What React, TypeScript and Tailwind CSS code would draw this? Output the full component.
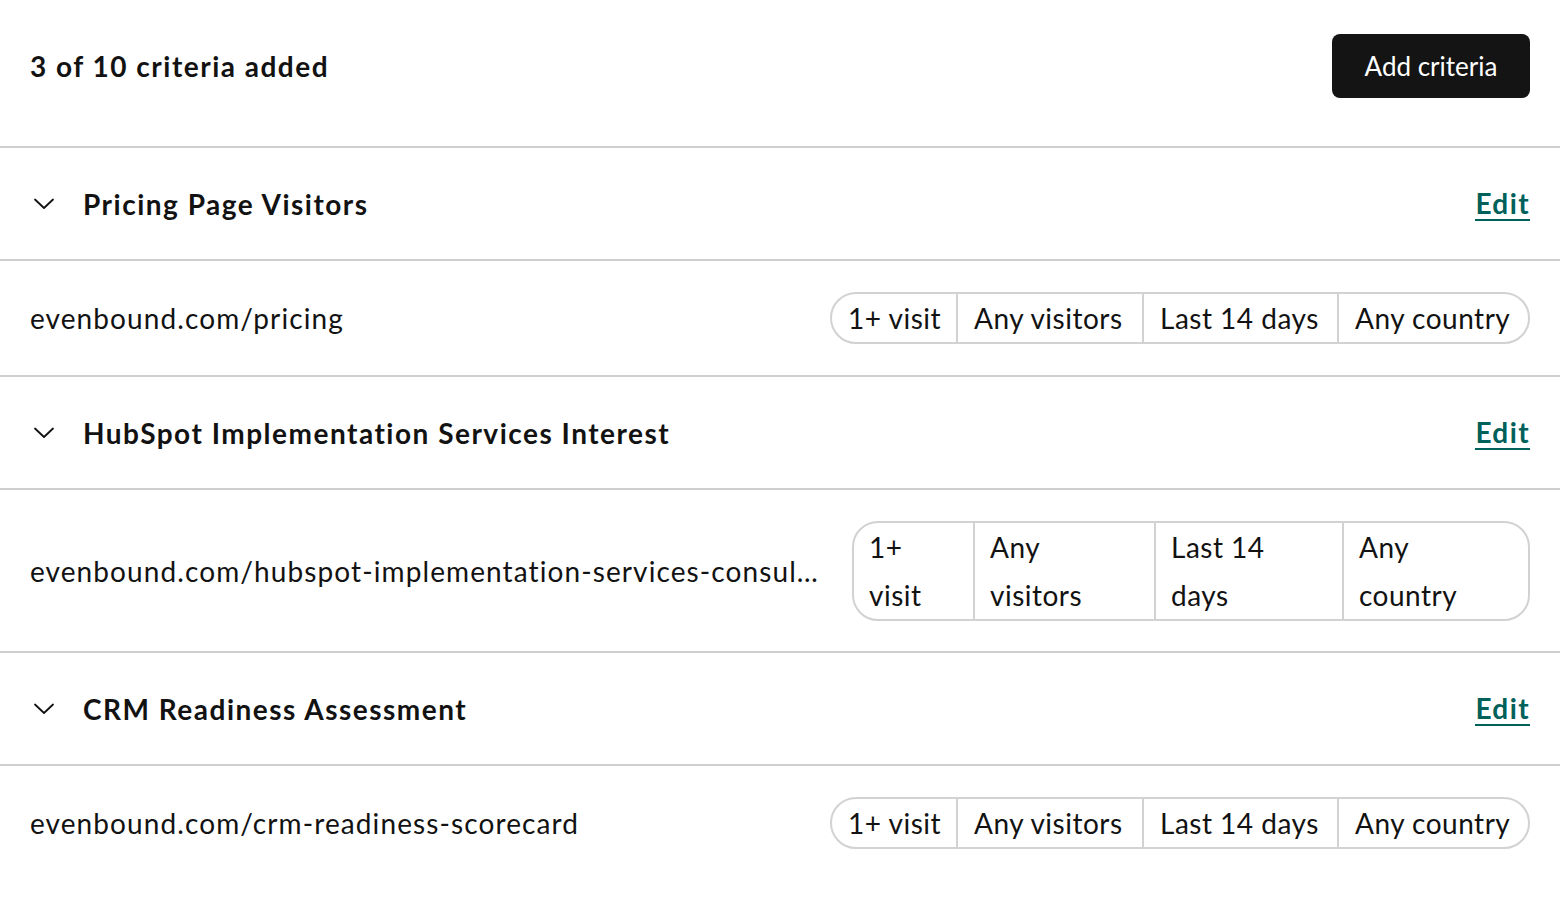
import React from "react";

type Criterion = {
  title: string;
  url: string;
  wrapped?: boolean;
};

const criteria: Criterion[] = [
  { title: "Pricing Page Visitors", url: "evenbound.com/pricing" },
  {
    title: "HubSpot Implementation Services Interest",
    url: "evenbound.com/hubspot-implementation-services-consulting",
    wrapped: true,
  },
  { title: "CRM Readiness Assessment", url: "evenbound.com/crm-readiness-scorecard" },
];

// Each filter chip: single-line label, the two-line split used when the row is narrow,
// and the cell widths for both layouts.
const filters = [
  { label: "1+ visit", lines: ["1+", "visit"], w: "w-[124px]", ww: "w-[119px]" },
  { label: "Any visitors", lines: ["Any", "visitors"], w: "w-[186px]", ww: "w-[181px]" },
  { label: "Last 14 days", lines: ["Last 14", "days"], w: "w-[195px]", ww: "w-[188px]" },
  { label: "Any country", lines: ["Any", "country"], w: "w-[191px]", ww: "w-[186px]" },
];

function Chevron() {
  return (
    <svg width="22" height="14" viewBox="0 0 22 14" fill="none" className="shrink-0">
      <path d="M2 2.5 L11 11 L20 2.5" stroke="#111" strokeWidth="1.8" strokeLinecap="round" strokeLinejoin="round" />
    </svg>
  );
}

function FilterPill({ wrapped }: { wrapped?: boolean }) {
  return (
    <div className="flex shrink-0 rounded-[26px] border-2 border-[#d2d2d2] overflow-hidden tracking-[0.5px]">
      {filters.map((f, i) => (
        <div
          key={f.label}
          className={
            (i > 0 ? "border-l-2 border-[#d2d2d2] " : "") +
            (wrapped ? f.ww + " pl-[15px] leading-[48px]" : f.w + " pl-[16px] h-[48px] leading-[48px] whitespace-nowrap")
          }
        >
          {wrapped ? (
            <>
              <div>{f.lines[0]}</div>
              <div>{f.lines[1]}</div>
            </>
          ) : (
            f.label
          )}
        </div>
      ))}
    </div>
  );
}

export default function App() {
  return (
    <div
      className="w-[1560px] min-h-[912px] bg-white text-[#121212]"
      style={{ fontFamily: "Lato, 'Noto Sans', sans-serif" }}
    >
      <div className="flex items-start justify-between h-[146px] pt-[34px] px-[30px]">
        <h1 className="h-[64px] leading-[64px] text-[28px] font-bold tracking-[1.5px]">3 of 10 criteria added</h1>
        <button className="h-[64px] w-[198px] rounded-[8px] bg-[#141414] text-white text-[26px]">
          Add criteria
        </button>
      </div>

      {criteria.map((c) => (
        <div key={c.title}>
          <div className="h-[2px] bg-[#cfcfcf]" />
          <div className="flex items-center justify-between h-[111px] pl-[33px] pr-[30px]">
            <div className="flex items-center gap-[28px]">
              <Chevron />
              <span className="text-[28px] font-bold tracking-[1.5px]">{c.title}</span>
            </div>
            <a className="text-[28px] font-bold tracking-[1.4px] text-[#00605a] border-b-2 border-[#00605a] leading-[32px] cursor-pointer">
              Edit
            </a>
          </div>
          <div className="h-[2px] bg-[#cfcfcf]" />
          <div
            className={
              "flex items-center justify-between gap-[34px] px-[30px] text-[28px] " +
              (c.wrapped ? "h-[161px]" : "h-[114px]")
            }
          >
            <span className="min-w-0 truncate tracking-[1.1px]">{c.url}</span>
            <FilterPill wrapped={c.wrapped} />
          </div>
        </div>
      ))}
    </div>
  );
}
